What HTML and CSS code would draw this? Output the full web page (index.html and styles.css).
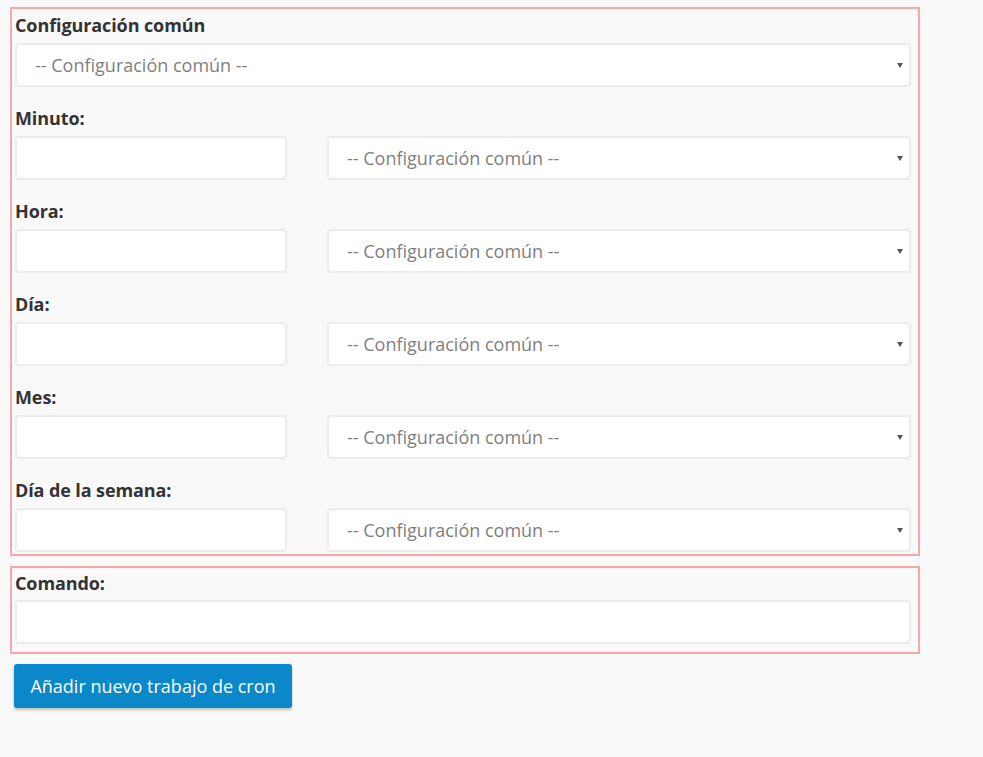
FILE: index.html
```html
<!DOCTYPE html>
<html lang="es">
<head>
<meta charset="utf-8">
<title>Cron</title>
<link rel="stylesheet" href="styles.css">
</head>
<body>
<div class="page">
  <div class="box box-main">
    <div class="group">
      <label class="lbl">Configuración común</label>
      <div class="sel"><select><option>-- Configuración común --</option></select></div>
    </div>
    <div class="group">
      <label class="lbl">Minuto:</label>
      <div class="row"><input class="inp" type="text"><div class="sel"><select><option>-- Configuración común --</option></select></div></div>
    </div>
    <div class="group">
      <label class="lbl">Hora:</label>
      <div class="row"><input class="inp" type="text"><div class="sel"><select><option>-- Configuración común --</option></select></div></div>
    </div>
    <div class="group">
      <label class="lbl">Día:</label>
      <div class="row"><input class="inp" type="text"><div class="sel"><select><option>-- Configuración común --</option></select></div></div>
    </div>
    <div class="group">
      <label class="lbl">Mes:</label>
      <div class="row"><input class="inp" type="text"><div class="sel"><select><option>-- Configuración común --</option></select></div></div>
    </div>
    <div class="group">
      <label class="lbl">Día de la semana:</label>
      <div class="row"><input class="inp" type="text"><div class="sel"><select><option>-- Configuración común --</option></select></div></div>
    </div>
  </div>
  <div class="box box-cmd">
    <label class="lbl">Comando:</label>
    <input class="inp inp-wide" type="text">
  </div>
  <button class="btn" type="button">Añadir nuevo trabajo de cron</button>
</div>
</body>
</html>
```
FILE: styles.css
```css
* { box-sizing: border-box; }
html, body { margin: 0; padding: 0; }
body {
  background: #f9f9f9;
  font-family: "Open Sans", "Liberation Sans", sans-serif;
  color: #333;
  height: 757px;
  overflow: hidden;
}
.page {
  padding: 7px 0 0 10px;
  display: flex;
  flex-direction: column;
  align-items: flex-start;
}
.box {
  width: 910px;
  border: 2px solid #f7a8a8;
  display: flex;
  flex-direction: column;
}
.box-main {
  padding: 6px 7px 2px 3px;
  gap: 21px;
}
.box-cmd {
  margin-top: 10px;
  padding: 5px 7px 8px 3px;
}
.group { display: flex; flex-direction: column; }
.lbl {
  display: block;
  font-weight: 700;
  font-size: 18px;
  line-height: 20px;
  margin-bottom: 8px;
  color: #333;
  letter-spacing: -0.1px;
}
.box-cmd .lbl { margin-bottom: 7px; }
.row {
  display: grid;
  grid-template-columns: 272px 1fr;
  gap: 40px;
}
.inp, .sel select {
  height: 44px;
  border: 2px solid #ececec;
  border-radius: 4px;
  background: #fff;
  font-family: inherit;
  outline: none;
}
.inp { width: 100%; margin: 0; }
.sel { position: relative; }
.sel select {
  width: 100%;
  appearance: none;
  -webkit-appearance: none;
  padding: 0 30px 0 18px;
  font-size: 18px;
  color: #7f7f7f;
  margin: 0;
}
.sel::after {
  content: "";
  position: absolute;
  right: 8px;
  top: 50%;
  margin-top: -2px;
  border-left: 3px solid transparent;
  border-right: 3px solid transparent;
  border-top: 5px solid #555;
  pointer-events: none;
}
.btn {
  margin-top: 10px;
  margin-left: 4px;
  width: 278px;
  height: 44px;
  border: none;
  border-radius: 3px;
  background: #0a88ca;
  color: #fff;
  font-family: inherit;
  font-size: 18px;
  box-shadow: 0 2px 3px rgba(0,0,0,0.25);
  cursor: pointer;
}
```
